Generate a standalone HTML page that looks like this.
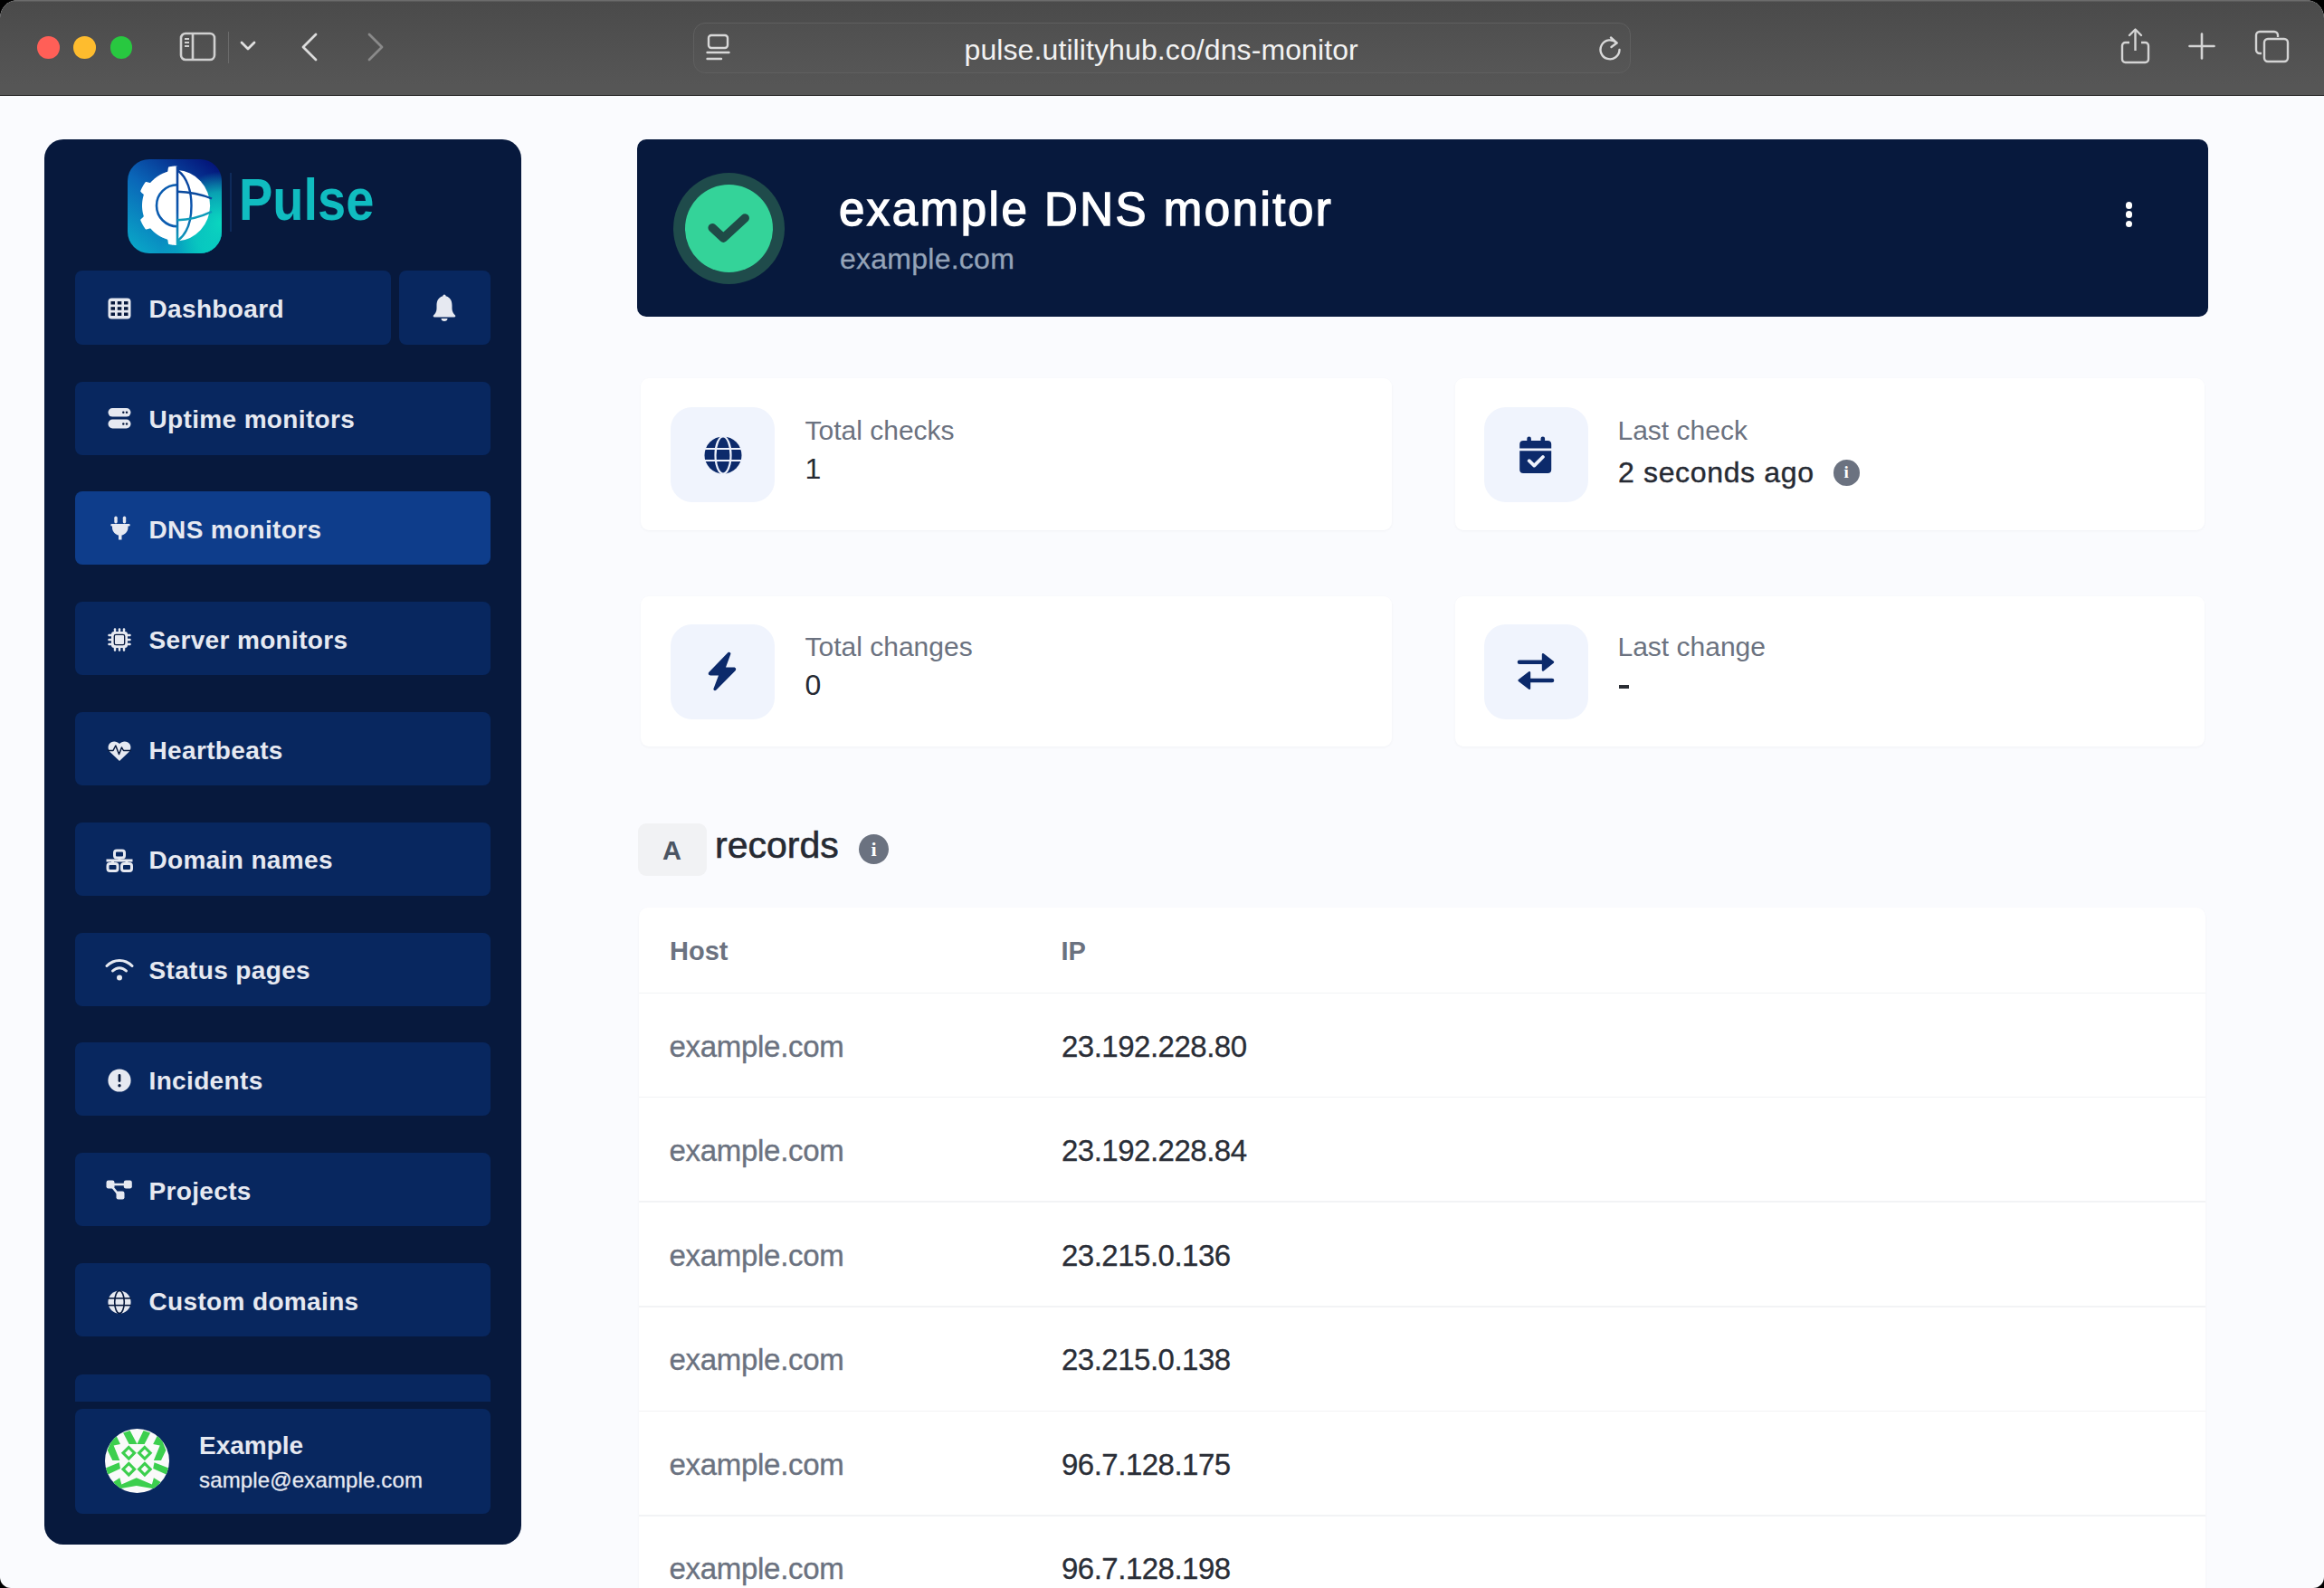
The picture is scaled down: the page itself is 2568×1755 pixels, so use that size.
<!DOCTYPE html>
<html><head><meta charset="utf-8"><title>Pulse - DNS monitor</title>
<style>
*{margin:0;padding:0;box-sizing:border-box}
html,body{width:2568px;height:1755px;overflow:hidden;background:#000}
body{font-family:"Liberation Sans", sans-serif;position:relative}
#win{position:absolute;left:0;top:0;width:2568px;height:1755px;border-radius:20px 20px 12px 12px;overflow:hidden;background:#fafbfe}
#toolbar{position:absolute;left:0;top:0;width:2568px;height:106px;background:linear-gradient(#4a4a4a,#565656 90%);border-bottom:1.5px solid #262626;box-shadow:inset 0 1.5px 0 #6c6c6c}
.tl{position:absolute;top:40px;width:24.5px;height:24.5px;border-radius:50%}
#url{position:absolute;left:766px;top:24.5px;width:1036px;height:56px;border-radius:13px;border:1.5px solid #5f5f5f;background:rgba(255,255,255,0.015)}
.t{position:absolute;white-space:nowrap}
#sidebar{position:absolute;left:48.5px;top:154px;width:527.5px;height:1553px;border-radius:21px;background:#07193d}
.nav{position:absolute;border-radius:8px}
#hdr{position:absolute;left:704px;top:154px;width:1736px;height:196px;border-radius:10px;background:#07193d}
.card{position:absolute;background:#fff;border-radius:9px;box-shadow:0 1px 3px rgba(15,23,42,0.04)}
.ibox{position:absolute;width:115px;height:105px;border-radius:24px;background:#f0f4fd}
.info{position:absolute;border-radius:50%;background:#6b7280;color:#fff;font-weight:700;text-align:center;font-family:"Liberation Serif",serif}
</style></head><body><div id="win">
<div id="toolbar">
<div class="tl" style="left:41px;background:#ff5f57"></div>
<div class="tl" style="left:81px;background:#febc2e"></div>
<div class="tl" style="left:121.6px;background:#28c840"></div>
<svg style="position:absolute;left:198px;top:35px" width="42" height="34" viewBox="0 0 42 34">
<rect x="2" y="2" width="37" height="29" rx="5" fill="none" stroke="#d0d0d0" stroke-width="2.6"/>
<line x1="15" y1="2" x2="15" y2="31" stroke="#d0d0d0" stroke-width="2.6"/>
<line x1="6" y1="8" x2="11" y2="8" stroke="#d0d0d0" stroke-width="2"/>
<line x1="6" y1="12" x2="11" y2="12" stroke="#d0d0d0" stroke-width="2"/>
<line x1="6" y1="16" x2="11" y2="16" stroke="#d0d0d0" stroke-width="2"/>
</svg>
<div style="position:absolute;left:252px;top:35px;width:1px;height:35px;background:#6a6a6a"></div>
<svg style="position:absolute;left:265px;top:45px" width="18" height="12" viewBox="0 0 18 12">
<polyline points="2,2 9,9 16,2" fill="none" stroke="#e0e0e0" stroke-width="2.8" stroke-linecap="round" stroke-linejoin="round"/></svg>
<svg style="position:absolute;left:330px;top:35px" width="24" height="34" viewBox="0 0 24 34">
<polyline points="19,3 5,17 19,31" fill="none" stroke="#dcdcdc" stroke-width="2.8" stroke-linecap="round" stroke-linejoin="round"/></svg>
<svg style="position:absolute;left:403px;top:35px" width="24" height="34" viewBox="0 0 24 34">
<polyline points="5,3 19,17 5,31" fill="none" stroke="#8a8a8a" stroke-width="2.8" stroke-linecap="round" stroke-linejoin="round"/></svg>
<div id="url"></div>
<svg style="position:absolute;left:780px;top:37px" width="28" height="32" viewBox="0 0 28 32">
<rect x="3" y="2" width="21" height="14" rx="3" fill="none" stroke="#d8d8d8" stroke-width="2.4"/>
<line x1="1.5" y1="21" x2="25.5" y2="21" stroke="#d8d8d8" stroke-width="2.4" stroke-linecap="round"/>
<line x1="1.5" y1="28" x2="17" y2="28" stroke="#d8d8d8" stroke-width="2.4" stroke-linecap="round"/>
</svg>
<div class="t" style="left:1065.5px;top:38.9px;font-size:32px;line-height:32px;color:#f2f2f2;font-weight:400;letter-spacing:0.1px;">pulse.utilityhub.co/dns-monitor</div>
<svg style="position:absolute;left:1764px;top:38px" width="30" height="32" viewBox="0 0 30 32">
<path d="M22.5 9.5 A10.5 10.5 0 1 0 25.5 17" fill="none" stroke="#d8d8d8" stroke-width="2.4" stroke-linecap="round"/>
<polyline points="16,3.5 22.5,9.5 16.5,14" fill="none" stroke="#d8d8d8" stroke-width="2.4" stroke-linecap="round" stroke-linejoin="round"/>
</svg>
<svg style="position:absolute;left:2342px;top:30px" width="36" height="42" viewBox="0 0 36 42">
<path d="M11 17 H6.5 a3.5 3.5 0 0 0 -3.5 3.5 V35.5 a3.5 3.5 0 0 0 3.5 3.5 H28.5 a3.5 3.5 0 0 0 3.5 -3.5 V20.5 a3.5 3.5 0 0 0 -3.5 -3.5 H24" fill="none" stroke="#d4d4d4" stroke-width="2.4"/>
<line x1="17.5" y1="3" x2="17.5" y2="26" stroke="#d4d4d4" stroke-width="2.4"/>
<polyline points="11,9 17.5,2.5 24,9" fill="none" stroke="#d4d4d4" stroke-width="2.4" stroke-linecap="round" stroke-linejoin="round"/>
</svg>
<svg style="position:absolute;left:2418px;top:36px" width="30" height="30" viewBox="0 0 30 30">
<line x1="15" y1="1.5" x2="15" y2="28.5" stroke="#d4d4d4" stroke-width="2.6" stroke-linecap="round"/>
<line x1="1.5" y1="15" x2="28.5" y2="15" stroke="#d4d4d4" stroke-width="2.6" stroke-linecap="round"/>
</svg>
<svg style="position:absolute;left:2491px;top:32px" width="40" height="40" viewBox="0 0 40 40">
<path d="M8 27 H6 a4 4 0 0 1 -4 -4 V7 a4 4 0 0 1 4 -4 H22 a4 4 0 0 1 4 4 V9" fill="none" stroke="#d4d4d4" stroke-width="2.4"/>
<rect x="11" y="11" width="26" height="25" rx="4" fill="none" stroke="#d4d4d4" stroke-width="2.4"/>
</svg>
</div>
<div id="sidebar"></div>
<svg style="position:absolute;left:141px;top:176px" width="104" height="104" viewBox="0 0 104 104">
<defs>
<linearGradient id="lg0" x1="0.85" y1="0" x2="0.1" y2="1"><stop offset="0" stop-color="#04157a"/><stop offset="0.5" stop-color="#0a66b8"/><stop offset="1" stop-color="#09a8c8"/></linearGradient>
<radialGradient id="lg1" cx="1" cy="0.68" r="0.55"><stop offset="0" stop-color="#0ad8c0"/><stop offset="0.6" stop-color="#0ad0c0" stop-opacity="0.7"/><stop offset="1" stop-color="#0ad0c0" stop-opacity="0"/></radialGradient>
<radialGradient id="lg2" cx="0.85" cy="1" r="0.5"><stop offset="0" stop-color="#00c4c0"/><stop offset="1" stop-color="#00c4c0" stop-opacity="0"/></radialGradient>
<linearGradient id="lgl" gradientUnits="userSpaceOnUse" x1="0" y1="10" x2="0" y2="95"><stop offset="0" stop-color="#0a3f9a"/><stop offset="0.55" stop-color="#0b56ae"/><stop offset="1" stop-color="#10a9bc"/></linearGradient>
</defs>
<rect width="104" height="104" rx="24" fill="url(#lg0)"/>
<rect width="104" height="104" rx="24" fill="url(#lg2)"/>
<rect width="104" height="104" rx="24" fill="url(#lg1)"/>
<path d="M55.00 7.40 L54.62 7.40 L54.24 7.41 L53.85 7.42 L53.47 7.43 L53.09 7.44 L52.71 7.46 L52.33 7.48 L51.94 7.51 L51.56 7.54 L51.18 7.57 L50.80 7.60 L50.42 7.64 L50.04 7.68 L49.66 7.73 L49.28 7.77 L48.90 7.83 L48.53 7.88 L48.15 7.94 L47.77 8.00 L47.39 8.07 L47.02 8.13 L46.64 8.20 L46.27 8.28 L45.89 8.36 L45.52 8.44 L45.19 8.72 L44.95 9.34 L44.77 10.17 L44.63 11.12 L44.51 12.06 L44.38 12.90 L44.19 13.51 L43.92 13.81 L43.60 13.90 L43.27 14.01 L42.95 14.11 L42.63 14.22 L42.30 14.32 L41.98 14.44 L41.66 14.55 L41.34 14.67 L41.02 14.79 L40.71 14.91 L40.39 15.04 L40.08 15.17 L39.76 15.30 L39.45 15.43 L39.14 15.57 L38.83 15.71 L38.52 15.85 L38.21 16.00 L37.90 16.15 L37.60 16.30 L37.29 16.45 L36.99 16.61 L36.69 16.77 L36.39 16.93 L36.09 17.09 L35.80 17.26 L35.50 17.43 L35.21 17.60 L34.91 17.77 L34.62 17.95 L34.33 18.13 L34.05 18.31 L33.76 18.49 L33.47 18.68 L33.19 18.87 L32.91 19.06 L32.63 19.25 L32.35 19.45 L32.08 19.65 L31.80 19.85 L31.53 20.05 L31.26 20.26 L30.99 20.47 L30.72 20.68 L30.46 20.89 L30.19 21.11 L29.93 21.32 L29.67 21.54 L29.41 21.77 L29.16 21.99 L28.90 22.22 L28.65 22.45 L28.40 22.68 L28.15 22.91 L27.91 23.15 L27.66 23.38 L27.42 23.62 L27.18 23.86 L26.95 24.11 L26.71 24.35 L26.48 24.60 L26.25 24.85 L26.02 25.10 L25.79 25.36 L25.57 25.61 L25.34 25.87 L24.97 26.00 L24.33 25.92 L23.51 25.70 L22.60 25.43 L21.68 25.17 L20.85 24.99 L20.18 24.96 L19.79 25.15 L19.57 25.46 L19.34 25.77 L19.12 26.08 L18.90 26.39 L18.69 26.71 L18.48 27.03 L18.27 27.34 L18.06 27.67 L17.86 27.99 L17.65 28.31 L17.46 28.64 L17.26 28.97 L17.07 29.30 L16.88 29.63 L16.69 29.97 L16.51 30.30 L16.33 30.64 L16.15 30.98 L15.97 31.32 L15.80 31.66 L15.63 32.00 L15.47 32.34 L15.30 32.69 L15.14 33.04 L14.99 33.38 L14.83 33.73 L14.68 34.09 L14.53 34.44 L14.39 34.79 L14.25 35.15 L14.30 35.58 L14.68 36.12 L15.27 36.74 L15.97 37.38 L16.69 38.01 L17.30 38.59 L17.71 39.08 L17.81 39.47 L17.70 39.80 L17.61 40.12 L17.51 40.45 L17.42 40.78 L17.33 41.11 L17.24 41.44 L17.16 41.77 L17.08 42.10 L17.00 42.43 L16.92 42.76 L16.85 43.09 L16.78 43.42 L16.72 43.76 L16.65 44.09 L16.59 44.43 L16.53 44.76 L16.48 45.10 L16.43 45.44 L16.38 45.77 L16.33 46.11 L16.29 46.45 L16.25 46.79 L16.21 47.12 L16.18 47.46 L16.15 47.80 L16.12 48.14 L16.10 48.48 L16.07 48.82 L16.05 49.16 L16.04 49.50 L16.02 49.84 L16.01 50.18 L16.01 50.52 L16.00 50.86 L16.00 51.20 L16.00 51.54 L16.01 51.88 L16.01 52.22 L16.02 52.56 L16.04 52.90 L16.05 53.24 L16.07 53.58 L16.10 53.92 L16.12 54.26 L16.15 54.60 L16.18 54.94 L16.21 55.28 L16.25 55.61 L16.29 55.95 L16.33 56.29 L16.38 56.63 L16.43 56.96 L16.48 57.30 L16.53 57.64 L16.59 57.97 L16.65 58.31 L16.72 58.64 L16.78 58.98 L16.85 59.31 L16.92 59.64 L17.00 59.97 L17.08 60.30 L17.16 60.63 L17.24 60.96 L17.33 61.29 L17.42 61.62 L17.51 61.95 L17.61 62.28 L17.70 62.60 L17.81 62.93 L17.71 63.32 L17.30 63.81 L16.69 64.39 L15.97 65.02 L15.27 65.66 L14.68 66.28 L14.30 66.82 L14.25 67.25 L14.39 67.61 L14.53 67.96 L14.68 68.31 L14.83 68.67 L14.99 69.02 L15.14 69.36 L15.30 69.71 L15.47 70.06 L15.63 70.40 L15.80 70.74 L15.97 71.08 L16.15 71.42 L16.33 71.76 L16.51 72.10 L16.69 72.43 L16.88 72.77 L17.07 73.10 L17.26 73.43 L17.46 73.76 L17.65 74.09 L17.86 74.41 L18.06 74.73 L18.27 75.06 L18.48 75.37 L18.69 75.69 L18.90 76.01 L19.12 76.32 L19.34 76.63 L19.57 76.94 L19.79 77.25 L20.18 77.44 L20.85 77.41 L21.68 77.23 L22.60 76.97 L23.51 76.70 L24.33 76.48 L24.97 76.40 L25.34 76.53 L25.57 76.79 L25.79 77.04 L26.02 77.30 L26.25 77.55 L26.48 77.80 L26.71 78.05 L26.95 78.29 L27.18 78.54 L27.42 78.78 L27.66 79.02 L27.91 79.25 L28.15 79.49 L28.40 79.72 L28.65 79.95 L28.90 80.18 L29.16 80.41 L29.41 80.63 L29.67 80.86 L29.93 81.08 L30.19 81.29 L30.46 81.51 L30.72 81.72 L30.99 81.93 L31.26 82.14 L31.53 82.35 L31.80 82.55 L32.08 82.75 L32.35 82.95 L32.63 83.15 L32.91 83.34 L33.19 83.53 L33.47 83.72 L33.76 83.91 L34.05 84.09 L34.33 84.27 L34.62 84.45 L34.91 84.63 L35.21 84.80 L35.50 84.97 L35.80 85.14 L36.09 85.31 L36.39 85.47 L36.69 85.63 L36.99 85.79 L37.29 85.95 L37.60 86.10 L37.90 86.25 L38.21 86.40 L38.52 86.55 L38.83 86.69 L39.14 86.83 L39.45 86.97 L39.76 87.10 L40.08 87.23 L40.39 87.36 L40.71 87.49 L41.02 87.61 L41.34 87.73 L41.66 87.85 L41.98 87.96 L42.30 88.08 L42.63 88.18 L42.95 88.29 L43.27 88.39 L43.60 88.50 L43.92 88.59 L44.19 88.89 L44.38 89.50 L44.51 90.34 L44.63 91.28 L44.77 92.23 L44.95 93.06 L45.19 93.68 L45.52 93.96 L45.89 94.04 L46.27 94.12 L46.64 94.20 L47.02 94.27 L47.39 94.33 L47.77 94.40 L48.15 94.46 L48.53 94.52 L48.90 94.57 L49.28 94.63 L49.66 94.67 L50.04 94.72 L50.42 94.76 L50.80 94.80 L51.18 94.83 L51.56 94.86 L51.94 94.89 L52.33 94.92 L52.71 94.94 L53.09 94.96 L53.47 94.97 L53.85 94.98 L54.24 94.99 L54.62 95.00 L55.00 95.00 Z" fill="#fff"/>
<path d="M55 12 A38 39.3 0 0 1 55 90.5 Z" fill="#fff"/>
<path d="M55 51.2 m0 -23 A23 23 0 0 0 55 74.2" fill="none" stroke="#0b5cb0" stroke-width="2.6"/>
<rect x="53.7" y="7.5" width="2.6" height="87.5" fill="url(#lgl)"/>
<path d="M55.5 12.5 C66 20 70.5 36 70.5 51.2 C70.5 67 66 82 55.5 90" fill="none" stroke="url(#lgl)" stroke-width="2.4"/>
<path d="M55 35.7 C68 36 81 38.5 93 43.5" fill="none" stroke="#0a4a9e" stroke-width="2.4"/>
<path d="M55 67.2 C68 67 81 63.5 93 57.8" fill="none" stroke="#0e9cba" stroke-width="2.4"/>
</svg>
<div style="position:absolute;left:254px;top:191px;width:1.5px;height:65px;background:#0e2a5a"></div>
<div class="t" style="left:263.5px;top:188.9px;font-size:64px;line-height:64px;color:#10bcc0;font-weight:700;letter-spacing:0px;transform:scaleX(0.875);transform-origin:0 0;">Pulse</div>
<div class="nav" style="left:83px;top:299.0px;width:348.5px;height:81.5px;background:#08275f"></div><div style="position:absolute;left:119px;top:328.5px;line-height:0"><svg width="26" height="24" viewBox="0 0 26 24"><rect x="0.5" y="0.5" width="25" height="23" rx="4" fill="#e6e9f1"/>
 <g fill="#07193d"><rect x="3.5" y="4" width="4.5" height="3.5"/><rect x="10.8" y="4" width="4.5" height="3.5"/><rect x="18" y="4" width="4.5" height="3.5"/>
 <rect x="3.5" y="10.2" width="4.5" height="3.5"/><rect x="10.8" y="10.2" width="4.5" height="3.5"/><rect x="18" y="10.2" width="4.5" height="3.5"/>
 <rect x="3.5" y="16.5" width="4.5" height="3.5"/><rect x="10.8" y="16.5" width="4.5" height="3.5"/><rect x="18" y="16.5" width="4.5" height="3.5"/></g></svg></div><div class="t" style="left:164.5px;top:327.5px;font-size:28px;line-height:28px;color:#e6e9f1;font-weight:700;letter-spacing:0.35px;">Dashboard</div>
<div class="nav" style="left:440.5px;top:299px;width:101px;height:81.5px;background:#08275f"></div>
<svg style="position:absolute;left:478px;top:324px" width="26" height="32" viewBox="0 0 26 32"><path d="M13 1.5 C14 1.5 14.6 2.2 14.6 3.3 C19.5 4.5 21.5 8.5 21.5 13.5 V17 C21.5 20 23 22.5 25 24.5 C25.6 25.2 25.3 26.5 24 26.5 H2 C0.7 26.5 0.4 25.2 1 24.5 C3 22.5 4.5 20 4.5 17 V13.5 C4.5 8.5 6.5 4.5 11.4 3.3 C11.4 2.2 12 1.5 13 1.5 Z" fill="#e6e9f1"/>
<path d="M9.5 28 H16.5 C16.5 30 15 31 13 31 C11 31 9.5 30 9.5 28 Z" fill="#e6e9f1"/></svg>
<div class="nav" style="left:83px;top:421.6px;width:458.5px;height:81px;background:#08275f"></div><div style="position:absolute;left:118.8px;top:449.5px;line-height:0"><svg width="26" height="24" viewBox="0 0 26 24"><rect x="0.5" y="1" width="25" height="9.6" rx="4.8" fill="#e6e9f1"/><rect x="0.5" y="13.6" width="25" height="9.8" rx="4.9" fill="#e6e9f1"/>
 <g fill="#07193d"><circle cx="17.3" cy="5.8" r="1.2"/><circle cx="21" cy="5.8" r="1.2"/><circle cx="17.3" cy="18.5" r="1.2"/><circle cx="21" cy="18.5" r="1.2"/></g></svg></div><div class="t" style="left:164.5px;top:450.1px;font-size:28px;line-height:28px;color:#e6e9f1;font-weight:700;letter-spacing:0.35px;">Uptime monitors</div>
<div class="nav" style="left:83px;top:543.4px;width:458.5px;height:81px;background:#0e3d8b"></div><div style="position:absolute;left:119.5px;top:570.0px;line-height:0"><svg width="26" height="28" viewBox="0 0 26 28"><g fill="#e6e9f1"><rect x="6.3" y="0.5" width="3.4" height="8" rx="1.7"/><rect x="15.8" y="0.5" width="3.4" height="8" rx="1.7"/>
 <path d="M3.5 9 H22.5 a1 1 0 0 1 0 2.5 H21.5 V13 C21.5 17.5 18 21 14.5 21.5 V26.5 H11 V21.5 C7.5 21 4 17.5 4 13 V11.5 H3.5 a1 1 0 0 1 0 -2.5 Z"/></g></svg></div><div class="t" style="left:164.5px;top:571.9px;font-size:28px;line-height:28px;color:#e6e9f1;font-weight:700;letter-spacing:0.35px;">DNS monitors</div>
<div class="nav" style="left:83px;top:665.2px;width:458.5px;height:81px;background:#08275f"></div><div style="position:absolute;left:118.8px;top:694.0px;line-height:0"><svg width="26" height="26" viewBox="0 0 26 26"><g fill="#e6e9f1"><rect x="4" y="4" width="18" height="18" rx="3"/>
 <rect x="6.8" y="0.3" width="2.4" height="4.5" rx="1"/><rect x="11.8" y="0.3" width="2.4" height="4.5" rx="1"/><rect x="16.8" y="0.3" width="2.4" height="4.5" rx="1"/>
 <rect x="6.8" y="21.2" width="2.4" height="4.5" rx="1"/><rect x="11.8" y="21.2" width="2.4" height="4.5" rx="1"/><rect x="16.8" y="21.2" width="2.4" height="4.5" rx="1"/>
 <rect x="0.3" y="6.8" width="4.5" height="2.4" rx="1"/><rect x="0.3" y="11.8" width="4.5" height="2.4" rx="1"/><rect x="0.3" y="16.8" width="4.5" height="2.4" rx="1"/>
 <rect x="21.2" y="6.8" width="4.5" height="2.4" rx="1"/><rect x="21.2" y="11.8" width="4.5" height="2.4" rx="1"/><rect x="21.2" y="16.8" width="4.5" height="2.4" rx="1"/></g>
 <rect x="7.3" y="7.3" width="11.4" height="11.4" rx="1.8" fill="#e6e9f1" stroke="#07193d" stroke-width="1.3"/></svg></div><div class="t" style="left:164.5px;top:693.7px;font-size:28px;line-height:28px;color:#e6e9f1;font-weight:700;letter-spacing:0.35px;">Server monitors</div>
<div class="nav" style="left:83px;top:787.0px;width:458.5px;height:81px;background:#08275f"></div><div style="position:absolute;left:118.5px;top:817.5px;line-height:0"><svg width="26" height="24" viewBox="0 0 26 24"><path d="M13 4 C10 0.5 4 0.5 1.5 4.5 C-0.5 8 1 11.5 3 13.5 L13 23 L23 13.5 C25 11.5 26.5 8 24.5 4.5 C22 0.5 16 0.5 13 4 Z" fill="#e6e9f1"/>
 <polyline points="0,11.5 6,11.5 8.8,6 12.5,15.5 15.5,8 17.5,11.5 26,11.5" fill="none" stroke="#07193d" stroke-width="1.5" stroke-linejoin="round"/></svg></div><div class="t" style="left:164.5px;top:815.5px;font-size:28px;line-height:28px;color:#e6e9f1;font-weight:700;letter-spacing:0.35px;">Heartbeats</div>
<div class="nav" style="left:83px;top:908.8px;width:458.5px;height:81px;background:#08275f"></div><div style="position:absolute;left:115.5px;top:937.5px;line-height:0"><svg width="32" height="26" viewBox="0 0 32 26"><g fill="none" stroke="#e6e9f1" stroke-width="3"><rect x="10.5" y="2" width="11" height="8" rx="2.5"/>
 <rect x="3" y="16.5" width="11" height="8" rx="2.5"/><rect x="18.5" y="16.5" width="11" height="8" rx="2.5"/>
 <line x1="1.5" y1="13" x2="30.5" y2="13"/><line x1="16" y1="10" x2="16" y2="13"/><line x1="8.5" y1="13" x2="8.5" y2="16.5"/><line x1="24" y1="13" x2="24" y2="16.5"/></g></svg></div><div class="t" style="left:164.5px;top:937.3px;font-size:28px;line-height:28px;color:#e6e9f1;font-weight:700;letter-spacing:0.35px;">Domain names</div>
<div class="nav" style="left:83px;top:1030.6px;width:458.5px;height:81px;background:#08275f"></div><div style="position:absolute;left:115.5px;top:1060.0px;line-height:0"><svg width="32" height="24" viewBox="0 0 32 24"><g fill="none" stroke="#e6e9f1" stroke-width="3" stroke-linecap="round"><path d="M2 7.5 C10 -0.5 22 -0.5 30 7.5"/><path d="M8.5 13 C13 8.5 19 8.5 23.5 13"/></g>
 <circle cx="16" cy="20.5" r="3" fill="#e6e9f1"/></svg></div><div class="t" style="left:164.5px;top:1059.1px;font-size:28px;line-height:28px;color:#e6e9f1;font-weight:700;letter-spacing:0.35px;">Status pages</div>
<div class="nav" style="left:83px;top:1152.4px;width:458.5px;height:81px;background:#08275f"></div><div style="position:absolute;left:118.5px;top:1180.5px;line-height:0"><svg width="26" height="26" viewBox="0 0 26 26"><circle cx="13" cy="13" r="12.6" fill="#e6e9f1"/><rect x="11.6" y="6" width="2.8" height="9" rx="1.4" fill="#07193d"/><circle cx="13" cy="18.8" r="1.7" fill="#07193d"/></svg></div><div class="t" style="left:164.5px;top:1180.9px;font-size:28px;line-height:28px;color:#e6e9f1;font-weight:700;letter-spacing:0.35px;">Incidents</div>
<div class="nav" style="left:83px;top:1274.2px;width:458.5px;height:81px;background:#08275f"></div><div style="position:absolute;left:116.8px;top:1303.0px;line-height:0"><svg width="30" height="24" viewBox="0 0 30 24"><g fill="#e6e9f1"><rect x="0.5" y="1.5" width="9" height="9" rx="2.2"/><rect x="19.8" y="1.5" width="9" height="9" rx="2.2"/><rect x="11.5" y="13.5" width="9" height="9" rx="2.2"/></g>
 <g stroke="#e6e9f1" stroke-width="2.6"><line x1="8" y1="6" x2="21" y2="6"/><line x1="6.5" y1="8" x2="13" y2="16"/></g></svg></div><div class="t" style="left:164.5px;top:1302.7px;font-size:28px;line-height:28px;color:#e6e9f1;font-weight:700;letter-spacing:0.35px;">Projects</div>
<div class="nav" style="left:83px;top:1396.0px;width:458.5px;height:81px;background:#08275f"></div><div style="position:absolute;left:118.5px;top:1425.5px;line-height:0"><svg width="26" height="26" viewBox="0 0 26 26"><circle cx="13" cy="13" r="12.6" fill="#e6e9f1"/><g fill="none" stroke="#07193d" stroke-width="1.6"><ellipse cx="13" cy="13" rx="5.3" ry="12.6"/>
 <line x1="0" y1="8.8" x2="26" y2="8.8"/><line x1="0" y1="16.6" x2="26" y2="16.6"/></g></svg></div><div class="t" style="left:164.5px;top:1424.5px;font-size:28px;line-height:28px;color:#e6e9f1;font-weight:700;letter-spacing:0.35px;">Custom domains</div>
<div style="position:absolute;left:83px;top:1518.5px;width:458.5px;height:30px;background:#08275f;border-radius:8px 8px 0 0"></div>
<div class="nav" style="left:83px;top:1557px;width:458.5px;height:115.5px;background:#08275f"></div>
<svg style="position:absolute;left:116px;top:1579px" width="71" height="71" viewBox="0 0 71 71">
<defs><clipPath id="av"><circle cx="35.5" cy="35.5" r="35.5"/></clipPath></defs>
<g clip-path="url(#av)"><rect width="72" height="72" fill="#fafafa"/>
<g fill="#3ccf4e">
<polygon points="20.1,4.4 27.6,2.1 35.6,17.0 26.6,17.0"/>
<polygon points="42.6,2.1 50.1,4.6 43.6,17.0 35.4,17.0"/>
<polygon points="13.2,9.3 17.0,17.0 9.6,18.6 16.3,35.1 8.3,35.1 2.8,23.7 6.5,14.5 0,10 0,0 10,0"/>
<polygon points="57.0,9.3 53.2,17.0 60.7,18.6 53.9,35.1 62.0,35.1 67.4,23.7 63.8,14.5 72,10 72,0 62,0"/>
<polygon points="0,43.8 15.7,37.2 17.0,44.1 0,52"/>
<polygon points="71,43.8 54.5,37.2 53.2,44.1 71,52"/>
<polygon points="9.0,58.9 16.3,54.2 18.3,61.4 34.8,54.2 51.9,61.4 53.9,54.2 61.7,58.9 55.0,66.6 34.8,63.0 14.7,66.6"/>
</g>
<g fill="none" stroke="#3ccf4e" stroke-width="3.1">
<polygon points="26.3,20.5 32.6,26.8 26.3,33.1 20,26.8"/><polygon points="43.9,20.5 50.2,26.8 43.9,33.1 37.6,26.8"/>
<polygon points="26.3,38.4 32.6,44.7 26.3,51 20,44.7"/><polygon points="43.9,38.4 50.2,44.7 43.9,51 37.6,44.7"/>
</g></g></svg>
<div class="t" style="left:220.0px;top:1583.8px;font-size:28px;line-height:28px;color:#e6e9f1;font-weight:700;letter-spacing:0px;">Example</div>
<div class="t" style="left:220.0px;top:1624.4px;font-size:24px;line-height:24px;color:#e6e9f1;font-weight:400;letter-spacing:0.15px;-webkit-text-stroke:0.3px #e6e9f1;">sample@example.com</div>
<div id="hdr"></div>
<div style="position:absolute;left:743.5px;top:191px;width:123px;height:123px;border-radius:50%;background:#1f4b4b"></div>
<div style="position:absolute;left:756.5px;top:204px;width:97px;height:97px;border-radius:50%;background:#34d399"></div>
<svg style="position:absolute;left:775px;top:232px" width="60" height="44" viewBox="0 0 60 44"><polyline points="12.2,19.8 24.3,31 48.2,9" fill="none" stroke="#1f4b47" stroke-width="9.5" stroke-linecap="round" stroke-linejoin="round"/></svg>
<div class="t" style="left:927.0px;top:206.2px;font-size:51px;line-height:51px;color:#ffffff;font-weight:400;letter-spacing:2.5px;-webkit-text-stroke:1.4px #fff;">example DNS monitor</div>
<div class="t" style="left:928.0px;top:270.1px;font-size:32px;line-height:32px;color:#94a3b8;font-weight:400;letter-spacing:0.25px;-webkit-text-stroke:0.3px #94a3b8;">example.com</div>
<div style="position:absolute;left:2349.1px;top:223.2px;width:7.4px;height:7.4px;border-radius:50%;background:#fff"></div>
<div style="position:absolute;left:2349.1px;top:233.3px;width:7.4px;height:7.4px;border-radius:50%;background:#fff"></div>
<div style="position:absolute;left:2349.1px;top:243.7px;width:7.4px;height:7.4px;border-radius:50%;background:#fff"></div>
<div class="card" style="left:707.5px;top:417.5px;width:830px;height:168.5px"></div>
<div class="card" style="left:1607.5px;top:417.5px;width:828px;height:168.5px"></div>
<div class="card" style="left:707.5px;top:658.5px;width:830px;height:166.5px"></div>
<div class="card" style="left:1607.5px;top:658.5px;width:828px;height:166.5px"></div>
<div class="ibox" style="left:741px;top:450px"></div>
<div class="ibox" style="left:1640px;top:450px"></div>
<div class="ibox" style="left:741px;top:690px"></div>
<div class="ibox" style="left:1640px;top:690px"></div>
<svg style="position:absolute;left:777.5px;top:481.5px" width="42" height="42" viewBox="0 0 42 42"><circle cx="21" cy="21" r="20.5" fill="#0c2a6b"/>
<g fill="none" stroke="#eef2fc" stroke-width="2.2"><ellipse cx="21" cy="21" rx="8.5" ry="20.5"/><line x1="0" y1="14" x2="42" y2="14"/><line x1="0" y1="27" x2="42" y2="27"/></g></svg>
<svg style="position:absolute;left:1679px;top:482px" width="36" height="42" viewBox="0 0 36 42"><g fill="#0c2a6b"><rect x="8.3" y="0.5" width="4.6" height="7.5" rx="2.3"/><rect x="23.5" y="0.5" width="4.6" height="7.5" rx="2.3"/>
<path d="M0.2 9 a4 4 0 0 1 4 -4 H31.2 a4 4 0 0 1 4 4 V13.5 H0.2 Z"/><path d="M0.2 16.3 H35.2 V37 a4 4 0 0 1 -4 4 H4.2 a4 4 0 0 1 -4 -4 Z"/></g>
<polyline points="10.7,27.2 16.3,32.6 25.9,23" fill="none" stroke="#eef2fc" stroke-width="3.8" stroke-linecap="round" stroke-linejoin="round"/></svg>
<svg style="position:absolute;left:781px;top:720px" width="34" height="44" viewBox="0 0 34 44"><path d="M23.5 1 C25 0 27 1.2 26.3 3 L21 17.5 H30 C32 17.5 33 19.8 31.5 21.2 L10.5 42.5 C9 44 6.8 42.8 7.5 41 L13 26.5 H4 C2 26.5 1 24.2 2.5 22.8 Z" fill="#0c2a6b"/></svg>
<svg style="position:absolute;left:1676px;top:720px" width="44" height="44" viewBox="0 0 44 44"><g fill="#0c2a6b" stroke="#0c2a6b" stroke-linejoin="round" stroke-width="2.4">
<line x1="3" y1="11.7" x2="30" y2="11.7" stroke-width="4.6" stroke-linecap="round"/><polygon points="29,3.2 40,11.7 29,20.6"/>
<line x1="14" y1="32" x2="39" y2="32" stroke-width="4.6" stroke-linecap="round"/><polygon points="14,23.3 2.6,32 14,40.8"/></g></svg>
<div class="t" style="left:889.5px;top:461.1px;font-size:30px;line-height:30px;color:#6b7280;font-weight:400;letter-spacing:0px;">Total checks</div>
<div class="t" style="left:889.5px;top:501.9px;font-size:32px;line-height:32px;color:#262a33;font-weight:400;letter-spacing:0px;">1</div>
<div class="t" style="left:1787.5px;top:461.1px;font-size:30px;line-height:30px;color:#6b7280;font-weight:400;letter-spacing:0px;">Last check</div>
<div class="t" style="left:1788.0px;top:506.3px;font-size:32px;line-height:32px;color:#262a33;font-weight:400;letter-spacing:0.65px;-webkit-text-stroke:0.4px #262a33;">2 seconds ago</div>
<div class="info" style="left:2026px;top:508px;width:28.5px;height:28.5px;font-size:19px;line-height:28.5px">i</div>
<div class="t" style="left:889.5px;top:700.4px;font-size:30px;line-height:30px;color:#6b7280;font-weight:400;letter-spacing:0px;">Total changes</div>
<div class="t" style="left:889.5px;top:740.9px;font-size:32px;line-height:32px;color:#262a33;font-weight:400;letter-spacing:0px;">0</div>
<div class="t" style="left:1787.5px;top:700.4px;font-size:30px;line-height:30px;color:#6b7280;font-weight:400;letter-spacing:0px;">Last change</div>
<div style="position:absolute;left:1789px;top:756.8px;width:11.2px;height:3.9px;background:#2a2d33"></div>
<div style="position:absolute;left:704.5px;top:909.5px;width:76px;height:58px;border-radius:9px;background:#f1f2f4"></div>
<div class="t" style="left:732.0px;top:926.0px;font-size:29px;line-height:29px;color:#4b5563;font-weight:700;letter-spacing:0px;">A</div>
<div class="t" style="left:790.0px;top:913.9px;font-size:41px;line-height:41px;color:#262a33;font-weight:400;letter-spacing:0px;-webkit-text-stroke:0.6px #262a33;">records</div>
<div class="info" style="left:949px;top:922px;width:33px;height:33px;font-size:22px;line-height:33px">i</div>
<div class="card" style="left:705.5px;top:1002.5px;width:1731.5px;height:800px;border-radius:10px"></div>
<div class="t" style="left:740.0px;top:1036.5px;font-size:29px;line-height:29px;color:#6b7280;font-weight:700;letter-spacing:0px;">Host</div>
<div class="t" style="left:1172.5px;top:1036.5px;font-size:29px;line-height:29px;color:#6b7280;font-weight:700;letter-spacing:0px;">IP</div>
<div style="position:absolute;left:705.5px;top:1096.55px;width:1731.5px;height:1.5px;background:#f2f3f5"></div>
<div style="position:absolute;left:705.5px;top:1211.75px;width:1731.5px;height:1.5px;background:#f2f3f5"></div>
<div style="position:absolute;left:705.5px;top:1327.45px;width:1731.5px;height:1.5px;background:#f2f3f5"></div>
<div style="position:absolute;left:705.5px;top:1443.05px;width:1731.5px;height:1.5px;background:#f2f3f5"></div>
<div style="position:absolute;left:705.5px;top:1558.65px;width:1731.5px;height:1.5px;background:#f2f3f5"></div>
<div style="position:absolute;left:705.5px;top:1674.25px;width:1731.5px;height:1.5px;background:#f2f3f5"></div>
<div class="t" style="left:739.5px;top:1139.7px;font-size:33px;line-height:33px;color:#6b7280;font-weight:400;letter-spacing:-0.3px;-webkit-text-stroke:0.35px #6b7280;">example.com</div>
<div class="t" style="left:1173.0px;top:1139.7px;font-size:33px;line-height:33px;color:#2a2e37;font-weight:400;letter-spacing:-0.5px;-webkit-text-stroke:0.3px #2a2e37;">23.192.228.80</div>
<div class="t" style="left:739.5px;top:1255.1px;font-size:33px;line-height:33px;color:#6b7280;font-weight:400;letter-spacing:-0.3px;-webkit-text-stroke:0.35px #6b7280;">example.com</div>
<div class="t" style="left:1173.0px;top:1255.1px;font-size:33px;line-height:33px;color:#2a2e37;font-weight:400;letter-spacing:-0.5px;-webkit-text-stroke:0.3px #2a2e37;">23.192.228.84</div>
<div class="t" style="left:739.5px;top:1370.6px;font-size:33px;line-height:33px;color:#6b7280;font-weight:400;letter-spacing:-0.3px;-webkit-text-stroke:0.35px #6b7280;">example.com</div>
<div class="t" style="left:1173.0px;top:1370.6px;font-size:33px;line-height:33px;color:#2a2e37;font-weight:400;letter-spacing:-0.5px;-webkit-text-stroke:0.3px #2a2e37;">23.215.0.136</div>
<div class="t" style="left:739.5px;top:1486.0px;font-size:33px;line-height:33px;color:#6b7280;font-weight:400;letter-spacing:-0.3px;-webkit-text-stroke:0.35px #6b7280;">example.com</div>
<div class="t" style="left:1173.0px;top:1486.0px;font-size:33px;line-height:33px;color:#2a2e37;font-weight:400;letter-spacing:-0.5px;-webkit-text-stroke:0.3px #2a2e37;">23.215.0.138</div>
<div class="t" style="left:739.5px;top:1601.5px;font-size:33px;line-height:33px;color:#6b7280;font-weight:400;letter-spacing:-0.3px;-webkit-text-stroke:0.35px #6b7280;">example.com</div>
<div class="t" style="left:1173.0px;top:1601.5px;font-size:33px;line-height:33px;color:#2a2e37;font-weight:400;letter-spacing:-0.5px;-webkit-text-stroke:0.3px #2a2e37;">96.7.128.175</div>
<div class="t" style="left:739.5px;top:1716.9px;font-size:33px;line-height:33px;color:#6b7280;font-weight:400;letter-spacing:-0.3px;-webkit-text-stroke:0.35px #6b7280;">example.com</div>
<div class="t" style="left:1173.0px;top:1716.9px;font-size:33px;line-height:33px;color:#2a2e37;font-weight:400;letter-spacing:-0.5px;-webkit-text-stroke:0.3px #2a2e37;">96.7.128.198</div>
</div></body></html>
